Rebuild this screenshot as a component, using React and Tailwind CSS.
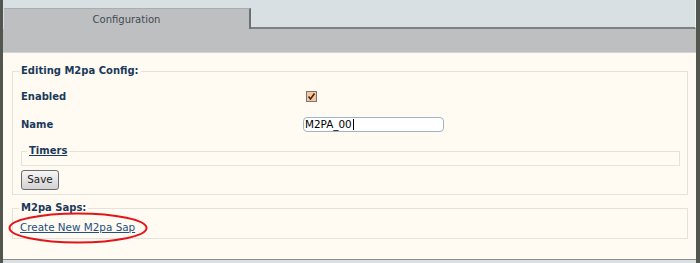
import React from "react";

function Checkbox() {
  return (
    <svg width="11" height="11" viewBox="0 0 11 11" className="ml-[3px]">
      <rect x="0.5" y="0.5" width="10" height="10" fill="#f5c6a0" stroke="#7d736a" />
      <path d="M2.5 5.5 L4.5 8 L8.5 2.5" fill="none" stroke="#3b2a1c" strokeWidth="1.6" />
    </svg>
  );
}

function App() {
  return (
    <div className="flex h-[263px] w-[700px] bg-[#51564f] font-['DejaVu_Sans',sans-serif]">
      <div className="ml-[3px] mr-[4px] flex flex-1 flex-col">
        {/* tab strip */}
        <div className="flex h-[29px] bg-[#d9e0e3]">
          <div className="ml-[1px] mt-[8px] flex w-[247px] items-center justify-center border-r-2 border-t border-r-[#6d7171] border-t-[#a9adad] bg-[#bebfc0] text-[10px] text-[#3e4a54]">
            Configuration
          </div>
          <div className="flex-1 border-b-2 border-r border-b-[#7c8181] border-r-[#eef2f3]"></div>
        </div>
        <div className="h-[24px] border-b border-[#d4d4d2] bg-[#bebfc0]"></div>

        {/* content */}
        <div className="relative flex-1 bg-[#fffbf2] pl-[9px] pr-[8px]">
          <fieldset className="mt-[12px] border border-[#e3e2db] pb-[4px] pl-[6px] pr-[7px]">
            <legend className="px-[2px] text-[10px] font-bold leading-[12px] text-[#1b3a5b]">
              Editing M2pa Config:
            </legend>
            <div className="ml-[2px] mt-[6px] grid grid-cols-[282px_1fr]">
              <div className="flex h-[26px] items-center text-[10px] font-bold text-[#1b3a5b]">Enabled</div>
              <div className="flex h-[26px] items-center">
                <Checkbox />
              </div>
              <div className="flex h-[30px] items-center text-[10px] font-bold text-[#1b3a5b]">Name</div>
              <div className="flex h-[30px] items-center">
                <div className="flex h-[15px] w-[141px] items-center rounded-[4px] border border-[#a3b3c6] bg-white pl-[1px] text-[10.4px] leading-[13px] text-black">
                  M2PA_00
                  <span className="ml-[1px] h-[11px] w-px bg-black"></span>
                </div>
              </div>
            </div>
            <fieldset className="ml-[2px] mt-[6px] border border-[#e3e2db] pl-[5px]">
              <legend className="px-[2px] text-[10px] font-bold leading-[12px] text-[#1b3a5b] underline">
                Timers
              </legend>
              <div className="h-[8px]"></div>
            </fieldset>
            <button className="ml-[2px] mt-[3px] h-[20px] w-[38px] rounded-[3px] border border-[#6b6b6b] bg-gradient-to-b from-[#f6f6f6] to-[#d2d2d2] text-[10.4px] text-[#222]">
              Save
            </button>
          </fieldset>

          <fieldset className="mt-[7px] border border-[#e3e2db] pb-[5px] pl-[6px] pr-[7px]">
            <legend className="px-[2px] text-[10px] font-bold leading-[12px] text-[#1b3a5b]">
              M2pa Saps:
            </legend>
            <a href="#" className="ml-[1px] mt-[7px] block text-[10.4px] leading-[12px] text-[#24507e] underline">
              Create New M2pa Sap
            </a>
          </fieldset>

          <svg
            className="absolute left-[5px] top-[159px]"
            width="141"
            height="33"
            viewBox="0 0 141 33"
          >
            <ellipse cx="70" cy="16" rx="68.5" ry="14.5" fill="none" stroke="#e3151b" strokeWidth="2" />
          </svg>
        </div>

        <div className="h-[4px] border-t border-[#8d8d8d] bg-[#d9e0e3]"></div>
      </div>
    </div>
  );
}

export default App;
